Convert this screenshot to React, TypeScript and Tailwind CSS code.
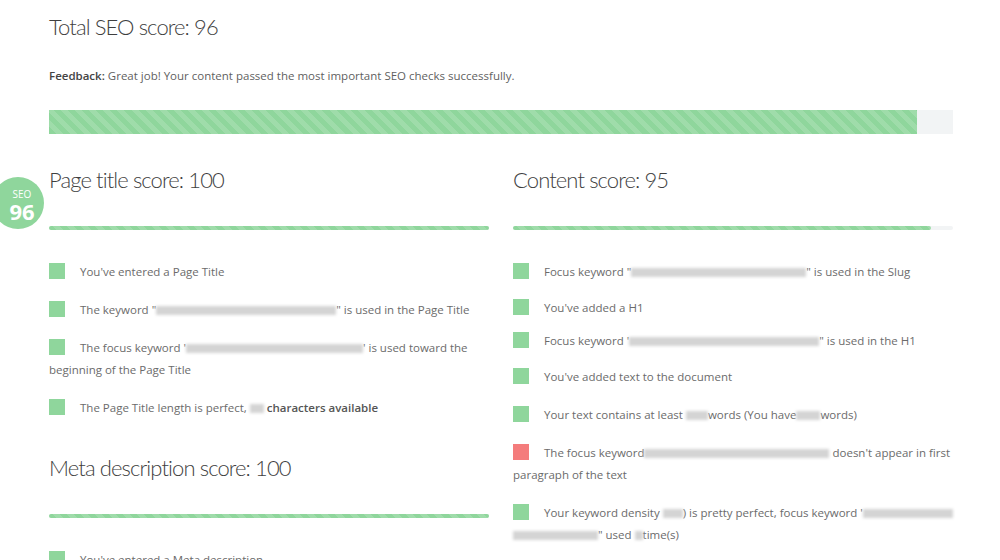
import React from "react";

type Part = string | { blur: number } | { bold: string };

interface Check {
  ok: boolean;
  parts: Part[];
  gap: string;
}

const stripe =
  "bg-[repeating-linear-gradient(45deg,#8fd69c_0px,#8fd69c_5px,#9fdcaa_5px,#9fdcaa_10px)]";

const heading = "font-['Lato',sans-serif] text-[22px] leading-8 font-light text-[#3f3f3f] tracking-[-0.9px]";

const pageTitle: Check[] = [
  { ok: true, gap: "mt-0", parts: ["You've entered a Page Title"] },
  { ok: true, gap: "mt-4", parts: ['The keyword "', { blur: 180 }, '" is used in the Page Title'] },
  {
    ok: true,
    gap: "mt-4",
    parts: ["The focus keyword '", { blur: 177 }, "' is used toward the beginning of the Page Title"],
  },
  {
    ok: true,
    gap: "mt-4",
    parts: ["The Page Title length is perfect, ", { blur: 14 }, " ", { bold: "characters available" }],
  },
];

const content: Check[] = [
  { ok: true, gap: "mt-0", parts: ['Focus keyword "', { blur: 175 }, '" is used in the Slug'] },
  { ok: true, gap: "mt-[14px]", parts: ["You've added a H1"] },
  { ok: true, gap: "mt-[11px]", parts: ["Focus keyword '", { blur: 190 }, '" is used in the H1'] },
  { ok: true, gap: "mt-[14px]", parts: ["You've added text to the document"] },
  {
    ok: true,
    gap: "mt-4",
    parts: ["Your text contains at least ", { blur: 22 }, "words (You have", { blur: 24 }, "words)"],
  },
  {
    ok: false,
    gap: "mt-4",
    parts: ["The focus keyword", { blur: 185 }, " doesn't appear in first paragraph of the text"],
  },
  {
    ok: true,
    gap: "mt-4",
    parts: [
      "Your keyword density ",
      { blur: 20 },
      ") is pretty perfect, focus keyword '",
      { blur: 90 },
      { blur: 85 },
      '" used ',
      { blur: 8 },
      "time(s)",
    ],
  },
];

function Blur({ w }: { w: number }) {
  return (
    <span
      className="inline-block h-[9px] bg-[#d4d4d4] blur-[1.5px] align-middle"
      style={{ width: w }}
    />
  );
}

function CheckItem({ item }: { item: Check }) {
  return (
    <p className={`${item.gap} text-[11.5px] leading-[22px] text-[#6b6b6b]`}>
      <span
        className={`inline-block w-4 h-4 mr-[15px] align-[-3px] ${
          item.ok ? "bg-[#8fd69c]" : "bg-[#f47c7c]"
        }`}
      />
      {item.parts.map((p, i) =>
        typeof p === "string" ? (
          <span key={i}>{p}</span>
        ) : "blur" in p ? (
          <Blur key={i} w={p.blur} />
        ) : (
          <b key={i} className="font-semibold text-[#555]">
            {p.bold}
          </b>
        )
      )}
    </p>
  );
}

function Section({ title, score, items, top }: { title: string; score: number; items: Check[]; top: string }) {
  return (
    <div className={top}>
      <h2 className={heading}>{title}</h2>
      <div className="mt-[30px] h-1 bg-[#f2f4f5] rounded-sm">
        <div className={`h-full rounded-sm ${stripe}`} style={{ width: `${score}%` }} />
      </div>
      <div className="mt-[31px]">
        {items.map((it, i) => (
          <CheckItem key={i} item={it} />
        ))}
      </div>
    </div>
  );
}

export default function App() {
  return (
    <div className="relative w-[1000px] h-[560px] overflow-hidden bg-white font-['Open_Sans',sans-serif]">
      <div className="absolute left-[-8px] top-[177px] w-[52px] h-[52px] rounded-full bg-[#8fd69c] flex flex-col items-center justify-center text-white pl-2 pt-1">
        <span className="text-[10px] leading-[11px]">SEO</span>
        <span className="text-[22px] leading-[22px] font-bold">96</span>
      </div>

      <div className="pl-[49px] pr-[47px] pt-[11px]">
        <h1 className={heading}>Total SEO score: 96</h1>
        <p className="mt-[25px] text-[11.5px] leading-[16px] text-[#5f5f5f]">
          <b className="font-semibold text-[#444]">Feedback:</b> Great job! Your content passed the most important
          SEO checks successfully.
        </p>
        <div className="mt-[26px] h-6 bg-[#f2f4f5]">
          <div className={`h-full w-[96%] ${stripe}`} />
        </div>

        <div className="flex gap-6">
          <div className="w-[440px]">
            <Section title="Page title score: 100" score={100} items={pageTitle} top="mt-[30px]" />
            <Section
              title="Meta description score: 100"
              score={100}
              items={[{ ok: true, gap: "mt-0", parts: ["You've entered a Meta description"] }]}
              top="mt-[33px]"
            />
          </div>
          <div className="w-[440px]">
            <Section title="Content score: 95" score={95} items={content} top="mt-[30px]" />
          </div>
        </div>
      </div>
    </div>
  );
}
